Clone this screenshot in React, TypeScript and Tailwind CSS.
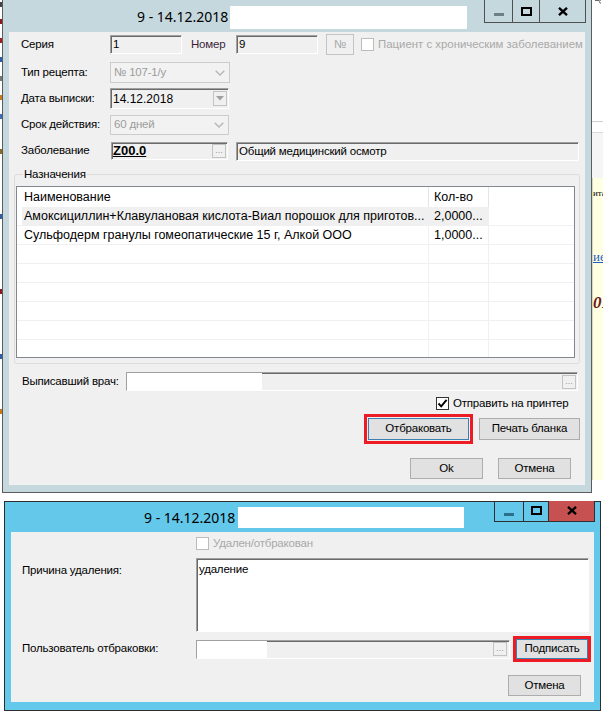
import React from "react";

type Kids = { children?: React.ReactNode; className?: string };

// 3D sunken edge used by WinForms text boxes
function Inset({ children, className = "" }: Kids) {
  return (
    <div
      className={`border border-t-[#a0a0a0] border-l-[#a0a0a0] border-r-white border-b-white shadow-[inset_1px_1px_0_#696969] ${className}`}
    >
      {children}
    </div>
  );
}

function Btn({ children, className = "", focused = false }: Kids & { focused?: boolean }) {
  return (
    <button
      type="button"
      className={`flex items-center justify-center bg-[#e1e1e1] border ${
        focused ? "border-[#3c7fb1]" : "border-[#adadad]"
      } ${className}`}
    >
      {children}
    </button>
  );
}

function Check({ checked = false, disabled = false }: { checked?: boolean; disabled?: boolean }) {
  return (
    <span
      className={`w-[13px] h-[13px] shrink-0 flex items-center justify-center bg-white border ${
        disabled ? "border-[#bcbcbc]" : "border-[#333333]"
      }`}
    >
      {checked && (
        <svg width="11" height="11" viewBox="0 0 11 11">
          <path d="M1.5 5.5 L4.2 8.3 L9.6 1.8" fill="none" stroke="#000" strokeWidth="1.9" />
        </svg>
      )}
    </span>
  );
}

function Dots({ className = "" }: Kids) {
  return (
    <span
      className={`w-[14px] h-[14px] shrink-0 flex items-end justify-center border border-[#c3c3c3] bg-[#f0f0f0] text-[9px] leading-none tracking-normal text-[#9a9a9a] pb-[2px] ${className}`}
    >
      ...
    </span>
  );
}

function Chevron() {
  return (
    <svg width="10" height="6" viewBox="0 0 10 6" className="shrink-0">
      <polyline points="0.7,0.7 5,5 9.3,0.7" fill="none" stroke="#b5b5b5" strokeWidth="1.3" />
    </svg>
  );
}

function CaptionButtons({ active }: { active: boolean }) {
  return (
    <div
      className={`flex border-x border-b mr-[5px] ${
        active ? "h-[21px] border-[#2f2f2f]" : "h-[23px] border-[#4f4f4f]"
      }`}
    >
      <div
        className={`flex justify-center border-r ${
          active ? "w-[29px] border-[#2f2f2f] pt-[12px]" : "w-[28px] border-[#4f4f4f] pt-[13px]"
        }`}
      >
        <div className={`w-[10px] h-[3px] ${active ? "bg-[#2c6f8c]" : "bg-[#6e7f85]"}`} />
      </div>
      <div
        className={`flex justify-center border-r ${
          active ? "w-[25px] border-[#2f2f2f] pt-[5px]" : "w-[27px] border-[#4f4f4f] pt-[7px]"
        }`}
      >
        <div className="w-[11px] h-[9px] border-2 border-black" />
      </div>
      <div className={`w-[45px] flex justify-center ${active ? "bg-[#c75050] pt-[5px]" : "pt-[7px]"}`}>
        <svg width="10" height="9" viewBox="0 0 10 9">
          <path d="M1 0.8 L9 8.2 M9 0.8 L1 8.2" stroke="#000" strokeWidth="2.3" />
        </svg>
      </div>
    </div>
  );
}

const rows = [
  {
    name: "Амоксициллин+Клавулановая кислота-Виал порошок для приготов...",
    qty: "2,0000...",
    sel: true,
  },
  { name: "Сульфодерм гранулы гомеопатические 15 г, Алкой ООО", qty: "1,0000...", sel: false },
  { name: "", qty: "", sel: false },
  { name: "", qty: "", sel: false },
  { name: "", qty: "", sel: false },
  { name: "", qty: "", sel: false },
  { name: "", qty: "", sel: false },
  { name: "", qty: "", sel: false },
];

function RecipeWindow() {
  return (
    <div className="absolute left-[2px] top-[-1px] w-[590px] h-[494px] border border-[#5c5c5c] bg-[#c5d8de] flex flex-col">
      {/* title bar */}
      <div className="h-[32px] shrink-0 flex items-start">
        <div className="pl-[134px] w-[227px] shrink-0 mt-[6px] h-[22px] leading-[22px] text-[14px] tracking-normal font-['Noto_Sans',sans-serif] text-black whitespace-nowrap">
          9 - 14.12.2018
        </div>
        <div className="mt-[6px] w-[237px] h-[23px] bg-white" />
        <div className="ml-auto">
          <CaptionButtons active={false} />
        </div>
      </div>

      {/* client area */}
      <div className="mx-[6px] h-[453px] bg-[#f0f0f0] flex flex-col">
        {/* Серия / Номер */}
        <div className="mt-[2px] h-[21px] flex items-center whitespace-nowrap">
          <span className="w-[101px] shrink-0 pl-[12px]">Серия</span>
          <Inset className="w-[72px] shrink-0 h-[19px] pl-[2px] leading-[17px]">1</Inset>
          <span className="ml-[9px] w-[45px] shrink-0 text-[#3c1f3c]">Номер</span>
          <Inset className="w-[82px] shrink-0 h-[19px] pl-[2px] leading-[17px]">9</Inset>
          <span className="ml-[8px] w-[28px] shrink-0 h-[21px] border border-[#c4c4c4] flex items-center justify-center text-[#a8a8a8]">
            №
          </span>
          <span className="ml-[7px] shrink-0">
            <Check disabled />
          </span>
          <span className="ml-[4px] text-[11.4px] tracking-normal text-[#a8a8a8]">
            Пациент с хроническим заболеванием
          </span>
        </div>

        {/* Тип рецепта */}
        <div className="mt-[7px] h-[21px] flex items-center whitespace-nowrap">
          <span className="w-[101px] shrink-0 pl-[12px]">Тип рецепта:</span>
          <div className="w-[120px] h-[21px] border border-[#cccccc] bg-[#f2f2f2] flex items-center pl-[3px] pr-[4px] text-[#9c9c9c]">
            <span className="flex-1">№ 107-1/у</span>
            <Chevron />
          </div>
        </div>

        {/* Дата выписки */}
        <div className="mt-[5px] h-[21px] flex items-center whitespace-nowrap">
          <span className="w-[101px] shrink-0 pl-[12px]">Дата выписки:</span>
          <Inset className="w-[119px] h-[21px] flex items-center pl-[2px] pr-[1px]">
            <span className="flex-1 text-[12px] tracking-normal">14.12.2018</span>
            <span className="w-[14px] h-[15px] border border-[#c4c4c4] flex items-center justify-center">
              <svg width="8" height="5" viewBox="0 0 8 5">
                <path d="M0 0 H8 L4 4.5 Z" fill="#a0a0a0" />
              </svg>
            </span>
          </Inset>
        </div>

        {/* Срок действия */}
        <div className="mt-[5px] h-[21px] flex items-center whitespace-nowrap">
          <span className="w-[101px] shrink-0 pl-[12px]">Срок действия:</span>
          <div className="w-[119px] h-[20px] border border-[#cccccc] bg-[#f2f2f2] flex items-center pl-[3px] pr-[4px] text-[#9c9c9c]">
            <span className="flex-1">60 дней</span>
            <Chevron />
          </div>
        </div>

        {/* Заболевание */}
        <div className="mt-[6px] h-[20px] flex items-center whitespace-nowrap">
          <span className="w-[102px] shrink-0 pl-[12px]">Заболевание</span>
          <Inset className="w-[117px] shrink-0 h-[18px] flex items-center pl-[1px] pr-[1px]">
            <span className="flex-1 font-bold underline text-[13px] tracking-normal leading-[14px]">Z00.0</span>
            <Dots />
          </Inset>
          <Inset className="ml-[8px] w-[343px] shrink-0 h-[19px] pl-[2px] leading-[17px]">
            Общий медицинский осмотр
          </Inset>
        </div>

        {/* Назначения */}
        <fieldset className="mt-[6px] ml-[5px] w-[566px] h-[197px] border border-[#dcdcdc] rounded-[3px] pl-[1px] pr-[4px]">
          <legend className="ml-[7px] px-[1px] leading-[14px]">Назначения</legend>
          <div className="mt-[5px] w-[559px] h-[172px] border border-[#828790] bg-white overflow-hidden text-[12.5px] tracking-normal">
            <div className="h-[20px] flex">
              <span className="w-[411px] pl-[7px] leading-[20px]">Наименование</span>
              <span className="w-[60px] border-l border-[#e5e5e5] pl-[5px] leading-[20px]">Кол-во</span>
              <span className="flex-1 border-l border-[#e5e5e5]" />
            </div>
            {rows.map((r, i) => (
              <div key={i} className="h-[19px] flex border-b border-[#f0f0f0]">
                <div className="w-[411px] pl-[5px]">
                  <div
                    className={`h-full pl-[2px] leading-[18px] whitespace-nowrap overflow-hidden ${
                      r.sel ? "bg-[#f0f0f0]" : ""
                    }`}
                  >
                    {r.name}
                  </div>
                </div>
                <div
                  className={`w-[60px] border-l border-[#f0f0f0] pl-[5px] leading-[18px] whitespace-nowrap ${
                    r.sel ? "bg-[#f0f0f0]" : ""
                  }`}
                >
                  {r.qty}
                </div>
                <div className="flex-1 border-l border-[#f0f0f0]" />
              </div>
            ))}
          </div>
        </fieldset>

        {/* Выписавший врач */}
        <div className="mt-[8px] h-[19px] flex items-center whitespace-nowrap">
          <span className="w-[117px] shrink-0 pl-[13px]">Выписавший врач:</span>
          <Inset className="w-[452px] shrink-0 h-[19px] flex items-center pr-[1px]">
            <div className="w-[135px] h-full bg-white" />
            <div className="flex-1" />
            <Dots className="h-[13px]" />
          </Inset>
        </div>

        {/* Отправить на принтер */}
        <div className="mt-[6px] h-[13px] flex items-center pl-[427px] whitespace-nowrap">
          <Check checked />
          <span className="ml-[4px]">Отправить на принтер</span>
        </div>

        {/* Отбраковать / Печать бланка */}
        <div className="mt-[4px] h-[30px] flex items-center pl-[355px] whitespace-nowrap">
          <div className="border-[3px] border-[#ed1c24] p-[1px]">
            <Btn focused className="w-[101px] h-[22px]">
              Отбраковать
            </Btn>
          </div>
          <Btn className="ml-[6px] w-[101px] h-[22px]">Печать бланка</Btn>
        </div>

        {/* Ok / Отмена */}
        <div className="mt-[14px] h-[21px] flex pl-[401px]">
          <Btn className="w-[73px] h-[21px]">Ok</Btn>
          <Btn className="ml-[15px] w-[73px] h-[21px]">Отмена</Btn>
        </div>
      </div>
    </div>
  );
}

function RejectWindow() {
  return (
    <div className="absolute left-[4px] top-[501px] w-[597px] h-[210px] border border-[#2f2f2f] bg-[#63c8e9] flex flex-col">
      <div className="h-[30px] shrink-0 flex items-start">
        <div className="pl-[139px] w-[233px] shrink-0 mt-[5px] h-[21px] leading-[21px] text-[14px] tracking-normal font-['Noto_Sans',sans-serif] text-black whitespace-nowrap">
          9 - 14.12.2018
        </div>
        <div className="mt-[5px] w-[226px] h-[21px] bg-white" />
        <div className="ml-auto -mt-[1px]">
          <CaptionButtons active />
        </div>
      </div>

      <div className="mx-[6px] h-[170px] bg-[#f0f0f0] flex flex-col">
        <div className="mt-[5px] h-[13px] flex items-center pl-[185px] whitespace-nowrap">
          <Check disabled />
          <span className="ml-[4px] text-[#a8a8a8]">Удален/отбракован</span>
        </div>

        <div className="mt-[8px] h-[74px] flex items-start whitespace-nowrap">
          <span className="w-[185px] shrink-0 pl-[11px] pt-[4px]">Причина удаления:</span>
          <Inset className="w-[393px] h-[74px] bg-white pl-[2px] pt-[3px] leading-[14px]">удаление</Inset>
        </div>

        <div className="mt-[4px] h-[26px] flex items-center whitespace-nowrap">
          <span className="w-[185px] shrink-0 pl-[11px]">Пользователь отбраковки:</span>
          <Inset className="w-[314px] shrink-0 h-[19px] flex items-center pr-[2px]">
            <div className="w-[70px] h-full bg-white" />
            <div className="flex-1" />
            <Dots className="h-[14px]" />
          </Inset>
          <div className="ml-[3px] border-[3px] border-[#ed1c24]">
            <Btn focused className="w-[72px] h-[20px]">
              Подписать
            </Btn>
          </div>
        </div>

        <div className="mt-[13px] h-[21px] flex pl-[497px]">
          <Btn className="w-[73px] h-[21px]">Отмена</Btn>
        </div>
      </div>
    </div>
  );
}

// bits of the application lying behind the dialogs
function Backdrop() {
  return (
    <>
      <div className="absolute left-0 top-0 w-[2px] h-[495px] flex flex-col">
        <div className="mt-[2px] h-[5px] bg-[#444]" />
        <div className="mt-[12px] h-[5px] bg-[#8b1a1a]" />
        <div className="mt-[14px] h-[5px] bg-[#a02020]" />
        <div className="mt-[14px] h-[5px] bg-[#2d5fa8]" />
        <div className="mt-[14px] h-[5px] bg-[#777]" />
        <div className="mt-[14px] h-[5px] bg-[#c9781e]" />
        <div className="mt-[14px] h-[5px] bg-[#3a6fb7]" />
        <div className="mt-[30px] h-[5px] bg-[#8b6a2a]" />
        <div className="mt-[60px] h-[5px] bg-[#2d5fa8]" />
        <div className="mt-[70px] h-[5px] bg-[#8b1a1a]" />
        <div className="mt-[60px] h-[5px] bg-[#2d5fa8]" />
        <div className="mt-[50px] h-[5px] bg-[#c9781e]" />
      </div>
      <div className="absolute left-[592px] top-0 w-[11px] h-[495px] flex flex-col overflow-hidden">
        <div className="h-[121px] pl-[3px]">
          <svg width="8" height="5" viewBox="0 0 8 5">
            <path d="M0 0.5 H4 M6 0 A1.6 1.6 0 1 0 6 3.2" fill="none" stroke="#666" strokeWidth="1" />
          </svg>
        </div>
        <div className="h-px bg-[#cfcfcf]" />
        <div className="h-[10px]" />
        <div className="h-px bg-[#dadada]" />
        <div className="h-[45px] bg-[#f5f5f5]" />
        <div className="h-[302px] bg-[#ffffe1] border-l border-[#d8d8c0] overflow-hidden whitespace-nowrap tracking-normal font-['Liberation_Serif',serif]">
          <div className="mt-[10px] text-[9px] leading-[10px]">ита</div>
          <div className="mt-[52px] text-[13px] leading-[14px] text-[#1f5fbf] underline">ие</div>
          <div className="mt-[30px] text-[17px] leading-[18px] font-bold italic text-[#6b1a1a]">01</div>
        </div>
      </div>
    </>
  );
}

export default function App() {
  return (
    <div className="relative w-[603px] h-[711px] overflow-hidden bg-white font-['Liberation_Sans',Arial,sans-serif] text-[11.5px] tracking-[-0.2px] text-black">
      <Backdrop />
      <RecipeWindow />
      <RejectWindow />
    </div>
  );
}
